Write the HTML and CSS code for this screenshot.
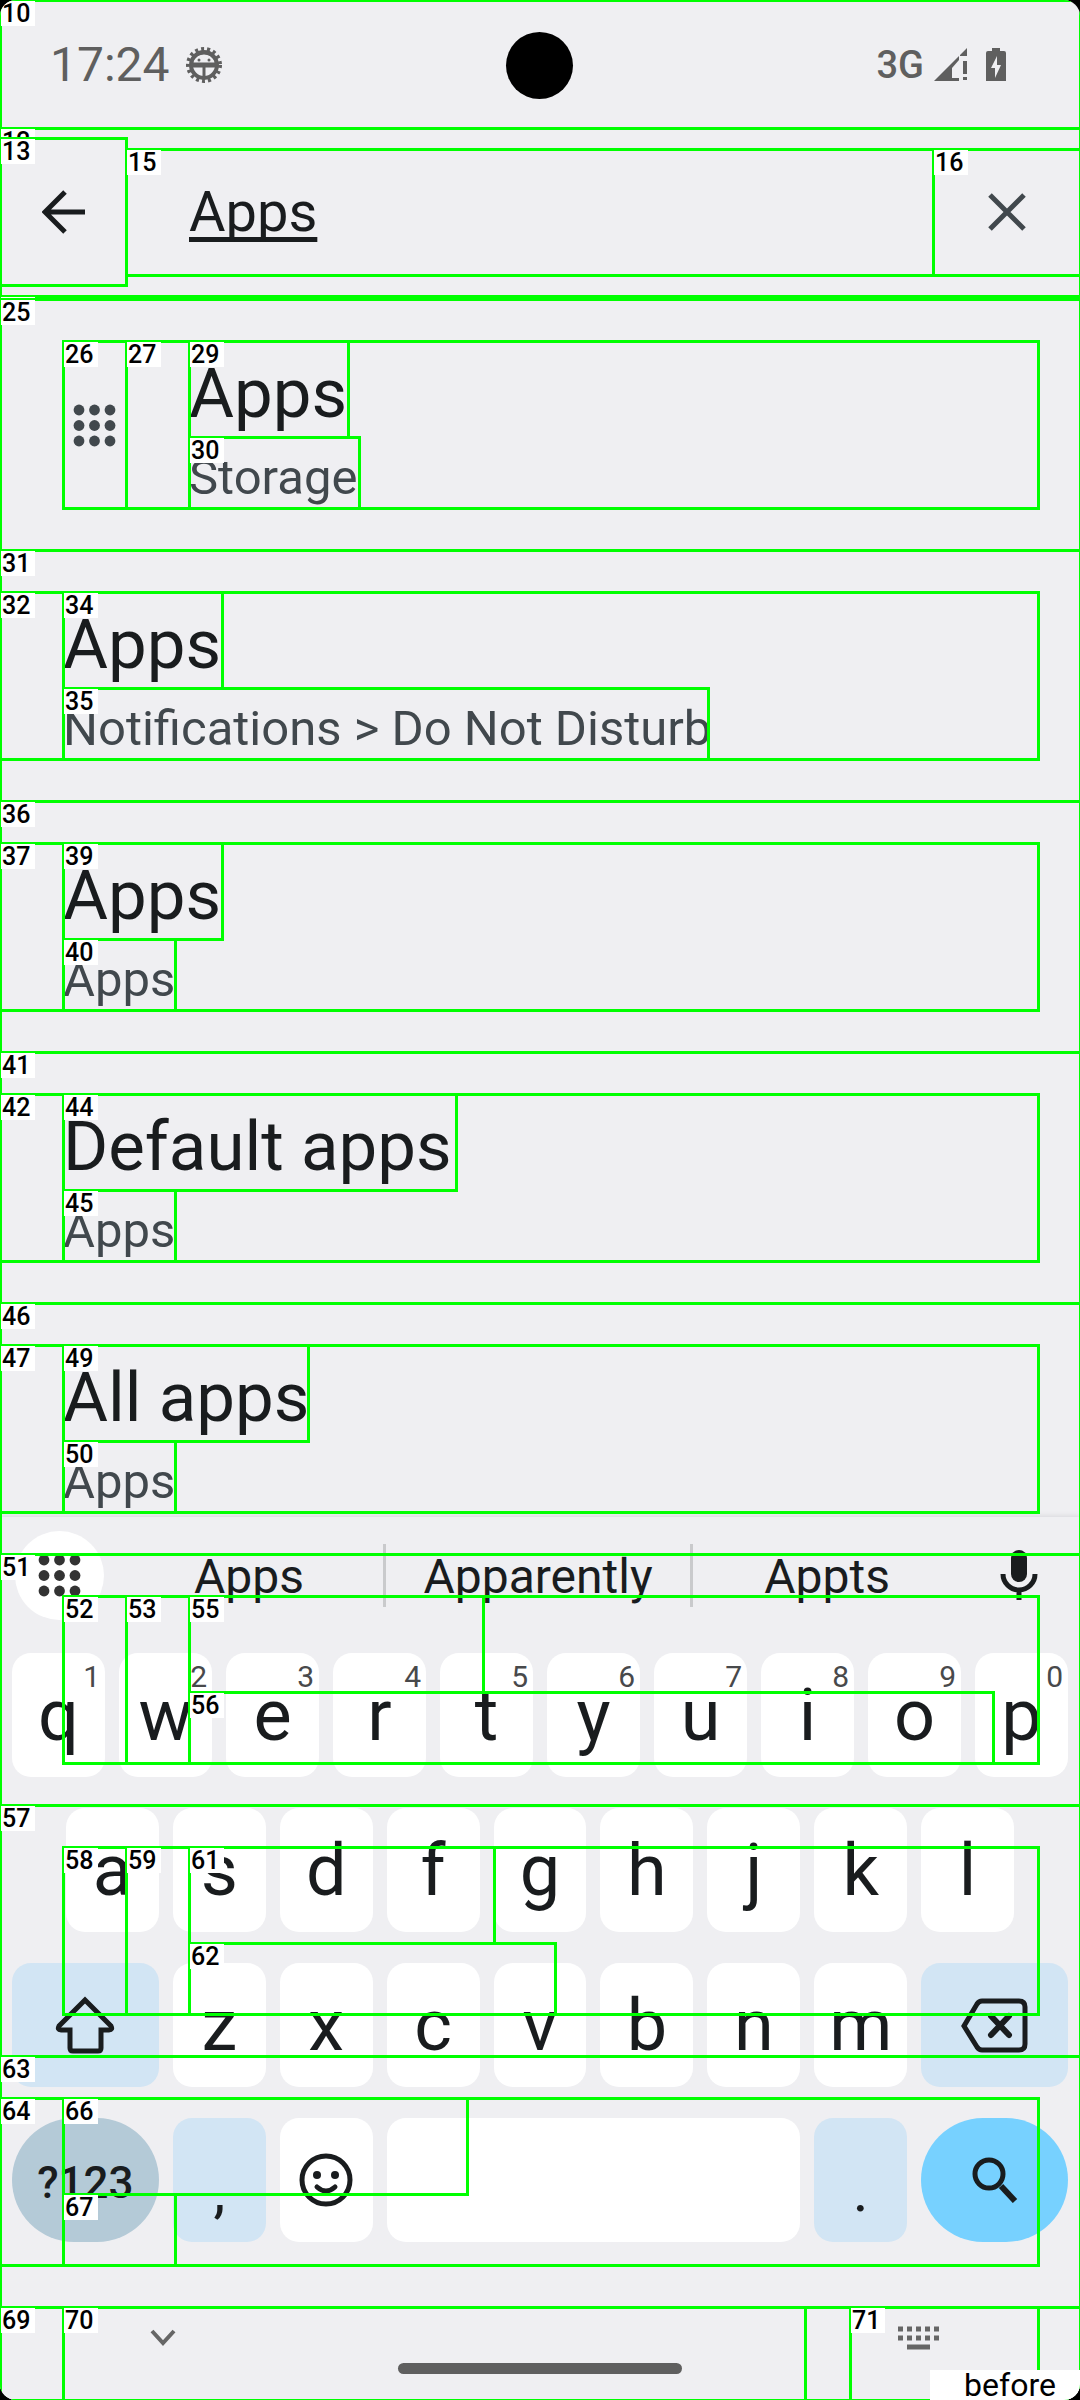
FILE: index.html
```html
<!DOCTYPE html>
<html lang="en">
<head>
<meta charset="utf-8">
<meta name="viewport" content="width=device-width, initial-scale=1">
<title>Settings search</title>
<link rel="stylesheet" href="styles.css">
</head>
<body>
<div class="screen">
  <header class="status">
    <div class="status-side">
      <span class="clock">17:24</span>
      <svg class="gear" viewBox="0 0 36 36" width="36" height="36" aria-hidden="true">
        <circle cx="18" cy="18" r="16" fill="none" stroke="currentColor" stroke-width="4" stroke-dasharray="3 3"/>
        <circle cx="18" cy="18" r="13" fill="none" stroke="currentColor" stroke-width="4"/>
        <path d="M6 14Q10 6 18 6Q26 6 30 14V17H6ZM6 19H30M18 19V31" fill="none" stroke="currentColor" stroke-width="3"/>
        <circle cx="13" cy="13" r="1.500" fill="currentColor"/>
        <circle cx="23" cy="13" r="1.500" fill="currentColor"/>
      </svg>
    </div>
    <span class="camera"></span>
    <div class="status-side status-right">
      <span class="network">3G</span>
      <svg class="signal" viewBox="0 0 34 34" width="34" height="34" aria-hidden="true">
        <path d="M0 33L25 8V12L18 20V30H25V33ZM26 7L33 0V8H26ZM29 13H33V26H29ZM29 29H33V32H29Z" fill="currentColor"/>
      </svg>
      <svg class="battery" viewBox="0 0 20 34" width="20" height="34" aria-hidden="true">
        <path fill-rule="evenodd" d="M6 0H14V3H18Q20 3 20 5V33H0V5Q0 3 2 3H6ZM11 8L5 20H9V30L15 17H11Z" fill="currentColor"/>
      </svg>
    </div>
  </header>

  <form class="toolbar">
    <button class="tool back" type="button" aria-label="Back">
      <svg viewBox="0 0 44 44" width="44" height="44"><path d="M43 22H4M23 2L3 22L23 42" fill="none" stroke="currentColor" stroke-width="5"/></svg>
    </button>
    <input class="query" type="text" value="Apps" aria-label="Search settings">
    <button class="tool clear" type="button" aria-label="Clear">
      <svg viewBox="0 0 40 40" width="40" height="40"><path d="M3 3L37 37M37 3L3 37" fill="none" stroke="currentColor" stroke-width="5"/></svg>
    </button>
  </form>

  <main class="results">
    <a class="result" href="#storage">
      <svg class="result-icon" viewBox="0 0 63 63" width="63" height="63" aria-hidden="true">
        <g fill="currentColor">
          <circle cx="16" cy="16" r="5.400"/><circle cx="31.500" cy="16" r="5.400"/><circle cx="47" cy="16" r="5.400"/>
          <circle cx="16" cy="31.500" r="5.400"/><circle cx="31.500" cy="31.500" r="5.400"/><circle cx="47" cy="31.500" r="5.400"/>
          <circle cx="16" cy="47" r="5.400"/><circle cx="31.500" cy="47" r="5.400"/><circle cx="47" cy="47" r="5.400"/>
        </g>
      </svg>
      <span class="result-text"><span class="title">Apps</span><span class="path">Storage</span></span>
    </a>
    <a class="result" href="#dnd"><span class="result-text"><span class="title">Apps</span><span class="path">Notifications &gt; Do Not Disturb</span></span></a>
    <a class="result" href="#apps"><span class="result-text"><span class="title">Apps</span><span class="path">Apps</span></span></a>
    <a class="result" href="#default"><span class="result-text"><span class="title">Default apps</span><span class="path">Apps</span></span></a>
    <a class="result" href="#all"><span class="result-text"><span class="title">All apps</span><span class="path">Apps</span></span></a>
  </main>

  <section class="keyboard" aria-label="Keyboard">
    <div class="strip">
      <button class="round" type="button" aria-label="Features">
        <svg viewBox="0 0 63 63" width="63" height="63">
          <g fill="currentColor">
            <circle cx="16" cy="16" r="5.400"/><circle cx="31.500" cy="16" r="5.400"/><circle cx="47" cy="16" r="5.400"/>
            <circle cx="16" cy="31.500" r="5.400"/><circle cx="31.500" cy="31.500" r="5.400"/><circle cx="47" cy="31.500" r="5.400"/>
            <circle cx="16" cy="47" r="5.400"/><circle cx="31.500" cy="47" r="5.400"/><circle cx="47" cy="47" r="5.400"/>
          </g>
        </svg>
      </button>
      <div class="words">
        <button class="word" type="button">Apps</button>
        <button class="word word-main" type="button">Apparently</button>
        <button class="word" type="button">Appts</button>
      </div>
      <button class="mic" type="button" aria-label="Voice input">
        <svg viewBox="0 0 38 52" width="38" height="52">
          <rect x="11" y="1" width="16" height="32" rx="8" fill="currentColor"/>
          <path d="M3 25A16 16 0 0 0 35 25M19 41V51" fill="none" stroke="currentColor" stroke-width="5"/>
        </svg>
      </button>
    </div>

    <div class="keys">
      <div class="row">
        <button class="key" type="button">q<small class="hint">1</small></button>
        <button class="key" type="button">w<small class="hint">2</small></button>
        <button class="key" type="button">e<small class="hint">3</small></button>
        <button class="key" type="button">r<small class="hint">4</small></button>
        <button class="key" type="button">t<small class="hint">5</small></button>
        <button class="key" type="button">y<small class="hint">6</small></button>
        <button class="key" type="button">u<small class="hint">7</small></button>
        <button class="key" type="button">i<small class="hint">8</small></button>
        <button class="key" type="button">o<small class="hint">9</small></button>
        <button class="key" type="button">p<small class="hint">0</small></button>
      </div>
      <div class="row row-inset">
        <button class="key" type="button">a</button>
        <button class="key" type="button">s</button>
        <button class="key" type="button">d</button>
        <button class="key" type="button">f</button>
        <button class="key" type="button">g</button>
        <button class="key" type="button">h</button>
        <button class="key" type="button">j</button>
        <button class="key" type="button">k</button>
        <button class="key" type="button">l</button>
      </div>
      <div class="row">
        <button class="key wide tinted" type="button" aria-label="Shift">
          <svg viewBox="0 0 60 60" width="60" height="60"><path d="M30 5L4 31Q2 35 6 35H15V53Q15 56 18 56H43Q46 56 46 53V35H54Q58 35 56 31Z" fill="none" stroke="currentColor" stroke-width="5"/></svg>
        </button>
        <button class="key" type="button">z</button>
        <button class="key" type="button">x</button>
        <button class="key" type="button">c</button>
        <button class="key" type="button">v</button>
        <button class="key" type="button">b</button>
        <button class="key" type="button">n</button>
        <button class="key" type="button">m</button>
        <button class="key wide tinted" type="button" aria-label="Backspace">
          <svg viewBox="0 0 68 56" width="68" height="56"><path d="M21 4H58Q64 4 64 10V47Q64 53 58 53H21Q18 53 16 50L3 29L16 7Q18 4 21 4Z" fill="none" stroke="currentColor" stroke-width="5"/><path d="M30 19L48 38M48 19L30 38" stroke="currentColor" stroke-width="6" stroke-linecap="round"/></svg>
        </button>
      </div>
      <div class="row">
        <button class="key wide symbols" type="button">?123</button>
        <button class="key tinted mark" type="button">,</button>
        <button class="key" type="button" aria-label="Emoji">
          <svg viewBox="0 0 54 54" width="54" height="54"><circle cx="27" cy="27" r="24" fill="none" stroke="currentColor" stroke-width="5"/><circle cx="18" cy="22" r="4" fill="currentColor"/><circle cx="36" cy="22" r="4" fill="currentColor"/><path d="M18 34Q27 42 36 34" fill="none" stroke="currentColor" stroke-width="5" stroke-linecap="round"/></svg>
        </button>
        <button class="key space" type="button" aria-label="Space"></button>
        <button class="key tinted mark" type="button">.</button>
        <button class="key wide search" type="button" aria-label="Search">
          <svg viewBox="0 0 46 46" width="46" height="46"><circle cx="17" cy="17" r="14" fill="none" stroke="currentColor" stroke-width="5"/><path d="M29 29L43 44" stroke="currentColor" stroke-width="6"/></svg>
        </button>
      </div>
    </div>

    <nav class="nav">
      <button class="nav-button" type="button" aria-label="Hide keyboard">
        <svg viewBox="0 0 26 18" width="26" height="18"><path d="M2 2L13 14L24 2" fill="none" stroke="currentColor" stroke-width="4"/></svg>
      </button>
      <span class="home"></span>
      <button class="nav-button nav-right" type="button" aria-label="Switch keyboard">
        <svg viewBox="0 0 41 24" width="41" height="24"><path d="M0 3H41M0 12H41" stroke="currentColor" stroke-width="5" stroke-dasharray="5 4"/><path d="M9 21H32" stroke="currentColor" stroke-width="5"/></svg>
      </button>
    </nav>
  </section>

  <svg class="marks" width="100%" height="100%">
    <g transform="translate(0 0)"><rect class="box" width="1080" height="128"/><rect class="tag"/><text class="num">10</text></g>
    <g transform="translate(0 128)"><rect class="box" width="1080" height="168"/><rect class="tag"/><text class="num">12</text></g>
    <g transform="translate(0 138)"><rect class="box" width="126" height="147"/><rect class="tag"/><text class="num">13</text></g>
    <g transform="translate(126 149)"><rect class="box" width="807" height="126"/><rect class="tag"/><text class="num">15</text></g>
    <g transform="translate(933 149)"><rect class="box" width="147" height="126"/><rect class="tag"/><text class="num">16</text></g>
    <g transform="translate(0 296)"><rect class="box" width="1080" height="2104"/><rect class="tag"/></g>
    <g transform="translate(0 299)"><rect class="box" width="1080" height="251"/><rect class="tag"/><text class="num">25</text></g>
    <g transform="translate(63 341)"><rect class="box" width="63" height="167"/><rect class="tag"/><text class="num">26</text></g>
    <g transform="translate(126 341)"><rect class="box" width="912" height="167"/><rect class="tag"/><text class="num">27</text></g>
    <g transform="translate(189 341)"><rect class="box" width="159" height="96"/><rect class="tag"/><text class="num">29</text></g>
    <g transform="translate(189 437)"><rect class="box" width="170" height="71"/><rect class="tag"/><text class="num">30</text></g>

    <g transform="translate(0 550)"><rect class="box" width="1080" height="251"/><rect class="tag"/><text class="num">31</text></g>
    <g transform="translate(0 592)"><rect class="box" width="1038" height="167"/><rect class="tag"/><text class="num">32</text></g>
    <g transform="translate(63 592)"><rect class="box" width="159" height="96"/><rect class="tag"/><text class="num">34</text></g>
    <g transform="translate(63 688)"><rect class="box" width="645" height="71"/><rect class="tag"/><text class="num">35</text></g>

    <g transform="translate(0 801)"><rect class="box" width="1080" height="251"/><rect class="tag"/><text class="num">36</text></g>
    <g transform="translate(0 843)"><rect class="box" width="1038" height="167"/><rect class="tag"/><text class="num">37</text></g>
    <g transform="translate(63 843)"><rect class="box" width="159" height="96"/><rect class="tag"/><text class="num">39</text></g>
    <g transform="translate(63 939)"><rect class="box" width="112" height="71"/><rect class="tag"/><text class="num">40</text></g>

    <g transform="translate(0 1052)"><rect class="box" width="1080" height="251"/><rect class="tag"/><text class="num">41</text></g>
    <g transform="translate(0 1094)"><rect class="box" width="1038" height="167"/><rect class="tag"/><text class="num">42</text></g>
    <g transform="translate(63 1094)"><rect class="box" width="393" height="96"/><rect class="tag"/><text class="num">44</text></g>
    <g transform="translate(63 1190)"><rect class="box" width="112" height="71"/><rect class="tag"/><text class="num">45</text></g>

    <g transform="translate(0 1303)"><rect class="box" width="1080" height="251"/><rect class="tag"/><text class="num">46</text></g>
    <g transform="translate(0 1345)"><rect class="box" width="1038" height="167"/><rect class="tag"/><text class="num">47</text></g>
    <g transform="translate(63 1345)"><rect class="box" width="245" height="96"/><rect class="tag"/><text class="num">49</text></g>
    <g transform="translate(63 1441)"><rect class="box" width="112" height="71"/><rect class="tag"/><text class="num">50</text></g>

    <g transform="translate(0 1554)"><rect class="box" width="1080" height="251"/><rect class="tag"/><text class="num">51</text></g>
    <g transform="translate(63 1596)"><rect class="box" width="63" height="167"/><rect class="tag"/><text class="num">52</text></g>
    <g transform="translate(126 1596)"><rect class="box" width="912" height="167"/><rect class="tag"/><text class="num">53</text></g>
    <g transform="translate(189 1596)"><rect class="box" width="294" height="96"/><rect class="tag"/><text class="num">55</text></g>
    <g transform="translate(189 1692)"><rect class="box" width="804" height="71"/><rect class="tag"/><text class="num">56</text></g>

    <g transform="translate(0 1805)"><rect class="box" width="1080" height="251"/><rect class="tag"/><text class="num">57</text></g>
    <g transform="translate(63 1847)"><rect class="box" width="63" height="167"/><rect class="tag"/><text class="num">58</text></g>
    <g transform="translate(126 1847)"><rect class="box" width="912" height="167"/><rect class="tag"/><text class="num">59</text></g>
    <g transform="translate(189 1847)"><rect class="box" width="305" height="96"/><rect class="tag"/><text class="num">61</text></g>
    <g transform="translate(189 1943)"><rect class="box" width="366" height="71"/><rect class="tag"/><text class="num">62</text></g>

    <g transform="translate(0 2056)"><rect class="box" width="1080" height="251"/><rect class="tag"/><text class="num">63</text></g>
    <g transform="translate(0 2098)"><rect class="box" width="1038" height="167"/><rect class="tag"/><text class="num">64</text></g>
    <g transform="translate(63 2098)"><rect class="box" width="404" height="96"/><rect class="tag"/><text class="num">66</text></g>
    <g transform="translate(63 2194)"><rect class="box" width="112" height="71"/><rect class="tag"/><text class="num">67</text></g>

    <g transform="translate(0 2307)"><rect class="box" width="1080" height="93"/><rect class="tag"/><text class="num">69</text></g>
    <g transform="translate(63 2307)"><rect class="box" width="742" height="93"/><rect class="tag"/><text class="num">70</text></g>
    <g transform="translate(850 2307)"><rect class="box" width="188" height="93"/><rect class="tag"/><text class="num">71</text></g>
  </svg>
  <span class="caption">before</span>
</div>
</body>
</html>
```
FILE: styles.css
```css
* {
  box-sizing: border-box;
}

body {
  margin: 0;
  background: #000;
  font-family: Roboto, "Liberation Sans", sans-serif;
  color: #191c1e;
}

button,
input {
  margin: 0;
  padding: 0;
  border: 0;
  background: none;
  font: inherit;
  color: inherit;
}

svg {
  display: block;
  flex: none;
}

.screen {
  position: relative;
  display: flex;
  flex-direction: column;
  height: 100vh;
  overflow: hidden;
  background: #efeff2;
  border-radius: 16px;
}

/* Status bar */
.status {
  display: flex;
  align-items: center;
  flex: none;
  height: 128px;
  padding: 2px 74px 0 50px;
  color: #5f5f5f;
}

.status-side {
  display: flex;
  align-items: center;
  flex: 1;
}

.status-right {
  justify-content: flex-end;
}

.clock {
  font-size: 48px;
  line-height: 56px;
}

.gear {
  margin-left: 16px;
}

.camera {
  width: 67px;
  height: 67px;
  margin-left: 23px;
  border-radius: 50%;
  background: #000;
}

.network {
  font-size: 38px;
  line-height: 44px;
  font-weight: 500;
}

.signal {
  margin-left: 10px;
}

.battery {
  margin-left: 18px;
}

/* Search toolbar */
.toolbar {
  display: flex;
  align-items: center;
  flex: none;
  height: 171px;
  padding-bottom: 4px;
}

.tool {
  display: flex;
  align-items: center;
  justify-content: center;
}

.back {
  width: 127px;
  height: 147px;
}

.query {
  flex: 1;
  min-width: 0;
  height: 126px;
  padding-left: 62px;
  font-size: 56px;
  text-decoration: underline;
  text-decoration-thickness: 5px;
  text-decoration-skip-ink: none;
  text-underline-offset: 6px;
  outline: none;
}

.clear {
  width: 147px;
  height: 126px;
  color: #41484d;
}

/* Results */
.results {
  flex: 1;
  min-height: 0;
  overflow: hidden;
}

.result {
  display: flex;
  align-items: center;
  gap: 63px;
  padding: 43px 41px 41px 63px;
  color: inherit;
  text-decoration: none;
}

.result-icon {
  color: #41484d;
}

.result-text {
  display: flex;
  flex-direction: column;
}

.title {
  font-size: 69px;
  line-height: 104px;
}

.path {
  font-size: 49px;
  line-height: 63px;
  color: #41484d;
}

/* Keyboard */
.keyboard {
  flex: none;
  background: #efeff2;
  box-shadow: 0 -1px 5px #d8d8db;
}

.strip {
  display: flex;
  align-items: center;
  height: 136px;
  padding: 0 42px 20px 15px;
}

.round {
  display: flex;
  align-items: center;
  justify-content: center;
  width: 89px;
  height: 89px;
  border-radius: 50%;
  background: #fff;
  color: #333;
}

.words {
  display: flex;
  flex: 1;
  padding: 0 39px 0 11px;
}

.word {
  flex: 272;
  min-width: 0;
  height: 63px;
  padding-top: 2px;
  font-size: 48px;
  line-height: 61px;
}

.word-main {
  flex: 309;
  border: solid #c9cacc;
  border-width: 0 3px;
}

.keys {
  display: flex;
  flex-direction: column;
  gap: 31px;
  padding: 0 12px;
}

.row {
  display: flex;
  gap: 14px;
}

.row-inset {
  padding: 0 54px;
}

.key {
  position: relative;
  display: flex;
  align-items: center;
  justify-content: center;
  flex: 93 1 0;
  min-width: 0;
  height: 124px;
  border-radius: 19px;
  background: #fff;
  font-size: 72px;
}

.wide {
  flex-grow: 147;
}

.space {
  flex-grow: 414;
}

.tinted {
  background: #d2e5f4;
}

.mark {
  padding-top: 20px;
  font-size: 60px;
}

.symbols {
  padding-top: 6px;
  border-radius: 62px;
  background: #b4cad7;
  font-size: 44px;
  font-weight: 500;
}

.search {
  border-radius: 62px;
  background: #77d1ff;
}

.hint {
  position: absolute;
  top: 9px;
  right: 5px;
  font-size: 30px;
  line-height: 30px;
  color: #48494b;
}

/* Navigation bar */
.nav {
  display: flex;
  justify-content: space-between;
  height: 158px;
  padding: 83px 141px 0 150px;
  color: #666;
}

.nav-button {
  display: flex;
  align-items: center;
  flex: 1;
  height: 26px;
}

.nav-right {
  justify-content: flex-end;
}

.home {
  width: 284px;
  height: 11px;
  margin: 38px 9px 0 0;
  border-radius: 6px;
  background: #5f5f5f;
}

/* Element markers drawn over the screen */
.marks {
  position: absolute;
  inset: 0;
  pointer-events: none;
}

.box {
  fill: none;
  stroke: #0f0;
  stroke-width: 3px;
  shape-rendering: crispEdges;
}

.tag {
  x: 1px;
  y: 1px;
  width: 34px;
  height: 25px;
  fill: #fff;
}

.num {
  font-size: 25px;
  font-weight: 500;
  fill: #000;
  transform: translate(2px, 22px);
}

.caption {
  position: absolute;
  right: 0;
  bottom: 0;
  width: 150px;
  height: 30px;
  padding-left: 10px;
  background: #fff;
  color: #000;
  font-size: 32px;
  line-height: 30px;
  text-align: center;
}
```
